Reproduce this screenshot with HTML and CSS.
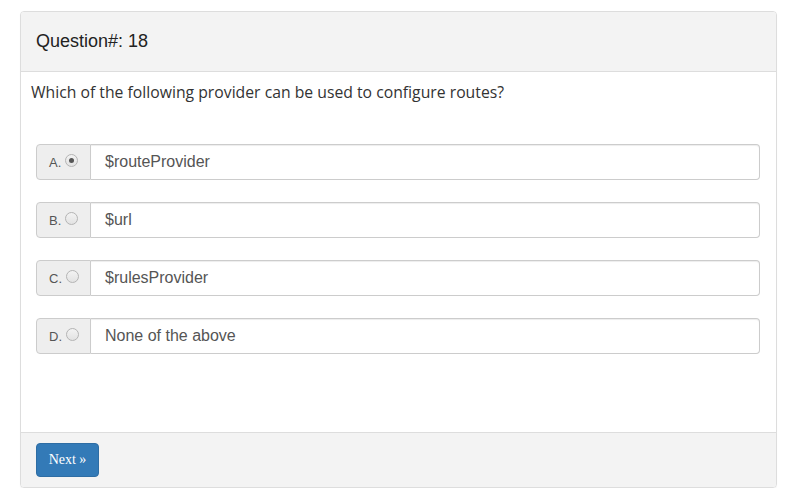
FILE: index.html
```html
<!DOCTYPE html>
<html>
<head>
<meta charset="utf-8">
<link rel="stylesheet" href="styles.css">
</head>
<body>
<div class="panel">
  <div class="panel-heading">Question#: 18</div>
  <div class="panel-body">
    <p class="question">Which of the following provider can be used to configure routes?</p>
    <div class="options">
      <div class="input-group">
        <span class="addon">A.<span class="radio checked"></span></span>
        <span class="field">$routeProvider</span>
      </div>
      <div class="input-group">
        <span class="addon">B.<span class="radio"></span></span>
        <span class="field">$url</span>
      </div>
      <div class="input-group">
        <span class="addon">C.<span class="radio"></span></span>
        <span class="field">$rulesProvider</span>
      </div>
      <div class="input-group">
        <span class="addon">D.<span class="radio"></span></span>
        <span class="field">None of the above</span>
      </div>
    </div>
  </div>
  <div class="panel-footer">
    <button class="btn">Next »</button>
  </div>
</div>
</body>
</html>
```
FILE: styles.css
```css
html, body {
  margin: 0;
  padding: 0;
  background: #fff;
}
body {
  padding: 11px 13px 0 20px;
  font-family: "Liberation Sans", Arial, sans-serif;
  color: #333;
}
.panel {
  width: 755px;
  height: 475px;
  border: 1px solid #dddddd;
  border-radius: 4px;
  display: flex;
  flex-direction: column;
  box-shadow: 0 1px 1px rgba(0,0,0,0.05);
}
.panel-heading {
  height: 59px;
  flex-shrink: 0;
  background: #f3f3f3;
  border-bottom: 1px solid #dddddd;
  border-radius: 3px 3px 0 0;
  padding: 0 15px;
  display: flex;
  align-items: center;
  font-size: 18px;
  color: #222;
}
.panel-body {
  flex: 1;
  padding: 0 16px 0 10px;
}
.question {
  margin: 9px 0 0 0;
  font-family: "Open Sans", sans-serif;
  font-size: 15.75px;
  line-height: 22px;
  color: #333;
}
.options {
  margin: 41px 0 0 5px;
  display: flex;
  flex-direction: column;
  gap: 22px;
}
.input-group {
  display: flex;
  height: 36px;
}
.addon {
  width: 55px;
  box-sizing: border-box;
  background: #eeeeee;
  border: 1px solid #cccccc;
  border-radius: 4px 0 0 4px;
  display: flex;
  align-items: center;
  padding-left: 12px;
  font-size: 13px;
  color: #555;
}
.radio {
  display: inline-block;
  width: 11px;
  height: 11px;
  border: 1px solid #b4b4b4;
  border-radius: 50%;
  background: linear-gradient(#f3f3f3, #e2e2e2);
  margin-left: 4px;
  margin-top: -4px;
  position: relative;
}
.radio.checked::after {
  content: "";
  position: absolute;
  left: 3px;
  top: 3px;
  width: 5px;
  height: 5px;
  border-radius: 50%;
  background: #555;
}
.field {
  flex: 1;
  border: 1px solid #cccccc;
  border-left: none;
  border-radius: 0 4px 4px 0;
  display: flex;
  align-items: center;
  padding-left: 14px;
  font-size: 16px;
  color: #555;
  box-shadow: inset 0 1px 1px rgba(0,0,0,0.075);
}
.panel-footer {
  flex-shrink: 0;
  height: 55px;
  background: #f3f3f3;
  border-top: 1px solid #dddddd;
  border-radius: 0 0 3px 3px;
  padding: 10px 15px 0 15px;
  box-sizing: border-box;
}
.btn {
  width: 63px;
  height: 34px;
  background: #337ab7;
  border: 1px solid #2e6da4;
  border-radius: 4px;
  color: #fff;
  font-family: "Liberation Serif", "Times New Roman", serif;
  font-size: 14px;
  padding: 0;
}
```
